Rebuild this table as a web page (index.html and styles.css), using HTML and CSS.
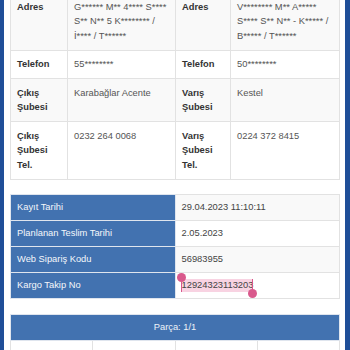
FILE: index.html
```html
<!DOCTYPE html>
<html lang="tr">
<head>
  <meta charset="UTF-8" />
  <meta name="viewport" content="width=device-width, initial-scale=1.0"/>
  <title>Kargo Takip</title>
  <link rel="stylesheet" href="styles.css">
</head>
<body>
  <div class="sheet">
    <table class="info">
      <colgroup><col class="c-label"><col class="c-value"><col class="c-label2"><col></colgroup>
      <tr class="odd">
        <th>Adres</th>
        <td>G****** M** 4**** S**** S** N** 5 K******** / İ**** / T******</td>
        <th>Adres</th>
        <td>V******** M** A***** S**** S** N** - K***** / B***** / T******</td>
      </tr>
      <tr>
        <th>Telefon</th>
        <td>55********</td>
        <th>Telefon</th>
        <td>50********</td>
      </tr>
      <tr class="odd">
        <th>Çıkış Şubesi</th>
        <td>Karabağlar Acente</td>
        <th>Varış Şubesi</th>
        <td>Kestel</td>
      </tr>
      <tr>
        <th>Çıkış Şubesi Tel.</th>
        <td>0232 264 0068</td>
        <th>Varış Şubesi Tel.</th>
        <td>0224 372 8415</td>
      </tr>
    </table>

    <table class="dates">
      <tr class="odd"><th>Kayıt Tarihi</th><td>29.04.2023 11:10:11</td></tr>
      <tr><th>Planlanan Teslim Tarihi</th><td>2.05.2023</td></tr>
      <tr class="odd"><th>Web Sipariş Kodu</th><td>56983955</td></tr>
      <tr>
        <th>Kargo Takip No</th>
        <td><span class="sel">12924323113203<span class="knob knob-start"></span><span class="knob knob-end"></span></span></td>
      </tr>
    </table>

    <table class="parts">
      <tr><th colspan="4" class="parts-head">Parça: 1/1</th></tr>
      <tr>
        <th>Birim</th>
        <td>PAKET</td>
        <th>Durum</th>
        <td>Transfer</td>
      </tr>
    </table>
  </div>
</body>
</html>
```

FILE: styles.css
```css
html, body {
  margin: 0;
  height: 100%;
  overflow: hidden;
}

body {
  background: #1f4e98;
  font-family: "Liberation Sans", Arial, sans-serif;
  font-size: 9.33px;
  line-height: 14px;
  color: #333;
}

.sheet {
  background: #fff;
  margin: -8px 5px 0 4px;
  padding: 0 5px 0 6px;
  min-height: 420px;
}

table {
  width: 100%;
  table-layout: fixed;
  border-collapse: collapse;
  margin-bottom: 14px;
}

th, td {
  border: 1px solid #e2e2e2;
  padding: 6.5px 6px;
  text-align: left;
  vertical-align: top;
}

th {
  font-weight: bold;
}

td {
  color: #555;
}

.odd th, .odd td {
  background: #f9f9f9;
}

.info th, .info td {
  line-height: 14.5px;
}

.info .c-label { width: 57px; }
.info .c-value { width: 108px; }
.info .c-label2 { width: 55px; }

/* tarih tablosu: sol sütun mavi */
.dates {
  margin-bottom: 15px;
}

.dates th, .dates td {
  padding: 6px 6px;
  line-height: 13px;
}

.dates th {
  background: #4272b0;
  color: #f4f7fb;
  font-weight: normal;
  border-color: #dfe5ee;
}

.dates .odd th {
  background: #4272b0;
}

.dates td {
  color: #444;
}

.sel {
  position: relative;
  display: inline-block;
  background: #f8d3e2;
  margin-left: -1px;
  padding-left: 1px;
}

.knob {
  position: absolute;
  top: 0;
  bottom: 0;
  width: 1.5px;
  background: #d9598c;
}

.knob::before {
  content: "";
  position: absolute;
  width: 9px;
  height: 9px;
  border-radius: 50%;
  background: #d9598c;
  left: -3.75px;
}

.knob-start { left: 0; }
.knob-start::before { top: -6px; }

.knob-end { right: 0; }
.knob-end::before { bottom: -6px; }

.parts th, .parts td {
  padding: 7px 6px;
}

.parts-head {
  background: #4272b0;
  color: #eef2f8;
  font-weight: normal;
  text-align: center !important;
  padding: 5.5px 6px !important;
  border-color: #dfe5ee;
}
```
